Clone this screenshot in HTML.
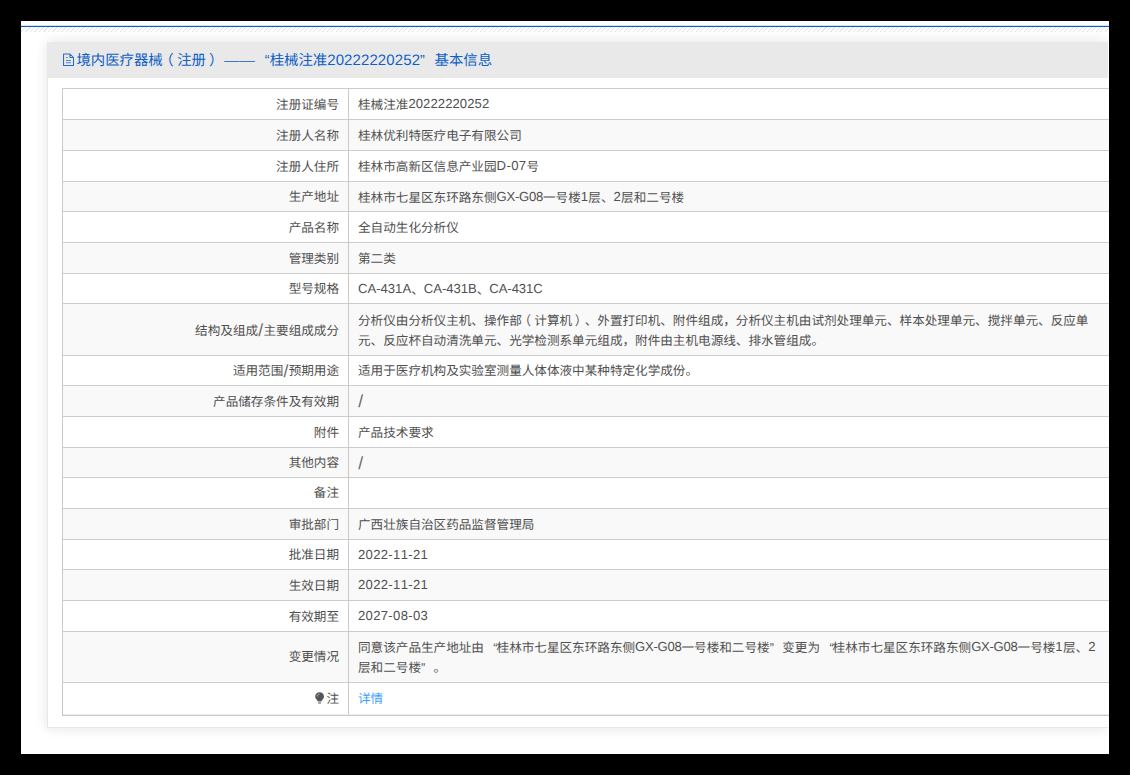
<!DOCTYPE html>
<html lang="zh-CN">
<head>
<meta charset="utf-8">
<title>境内医疗器械（注册）基本信息</title>
<style>
html,body{margin:0;padding:0;}
body{width:1130px;height:775px;background:#000;overflow:hidden;position:relative;
  font-family:"Liberation Sans",sans-serif;font-size:12.6px;line-height:19.7px;color:#505050;text-rendering:geometricPrecision;text-spacing-trim:space-all;font-kerning:none;}
.page{position:absolute;left:21px;top:21px;width:1088px;height:733px;background:#fff;overflow:hidden;}
/* coordinates inside .page are offset by -21,-21 via .abs wrapper */
.abs{position:absolute;left:-21px;top:-21px;width:1130px;height:775px;}
.topline{position:absolute;left:21px;top:26px;width:1088px;height:1px;background:#0e60c0;box-shadow:0 -1px 0 rgba(14,96,192,0.18);}
.hatch{position:absolute;left:21px;top:27px;width:1088px;height:5px;
  background:repeating-linear-gradient(135deg,#e3e3e3 0,#e3e3e3 0.7px,rgba(255,255,255,0) 0.75px,rgba(255,255,255,0) 3.18px);}
.panel{position:absolute;left:47px;top:42px;width:1061px;height:686px;background:#fff;border:1px solid #e8e8e8;border-right:0;box-sizing:border-box;
  box-shadow:0 0 12px rgba(0,0,0,0.115);}
.phead{position:absolute;left:-1px;top:-1px;width:1061px;height:35.5px;background:#e9e9e9;}
.title{position:absolute;left:15px;top:-1px;height:35.5px;line-height:35.5px;font-size:14.4px;color:#0e5fc4;white-space:nowrap;}
.title svg{position:absolute;left:0;top:11px;}
.title .t{position:absolute;left:13.4px;top:1px;white-space:nowrap;}
.n{font-size:13.1px;}
.v .n{position:relative;top:-1px;}
.title .n{font-size:15px;letter-spacing:0.1px;}
.em{display:inline-block;width:30.9px;}
.em i{display:inline-block;font-style:normal;transform:scaleX(1.07);transform-origin:0 50%;}
.s{font-size:17.5px;line-height:0;margin:0 0.25px;position:relative;top:1.5px;color:#6a6a6a;}
.pl{position:relative;left:-0.25em;}
.pr{position:relative;left:0.22em;}
.q{display:inline-block;width:1em;}
.ql{text-align:right;}
.qr{text-align:left;}
.v .ql{position:relative;left:1px;}
.tbl{position:absolute;left:62px;top:88px;width:1060px;height:628px;border-left:1px solid #c9c9c9;}
.r{position:absolute;left:0;width:100%;border-top:1px solid #cdcdcd;box-sizing:border-box;background:#fff;}
.r.g{background:#f9f9f9;}
.l{position:absolute;left:0;top:1.5px;bottom:-1.5px;width:285px;
  display:flex;align-items:center;justify-content:flex-end;padding-right:9px;box-sizing:content-box;width:276px;white-space:nowrap;}
.v{position:absolute;left:286px;top:1.5px;bottom:-1.5px;right:0;display:flex;align-items:center;padding-left:9px;white-space:nowrap;}
.bulb{vertical-align:-1.2px;margin-right:2.3px;}
a{color:#409eff;text-decoration:none;}
.vd{position:absolute;left:285px;top:0;width:1px;height:626px;background:#c9c9c9;}
.strip{position:absolute;left:1108px;top:33px;width:1px;height:721px;background:#fff;}
.bl{position:absolute;left:63px;top:714px;width:1060px;height:1px;background:#ececec;}
.bb{position:absolute;left:62px;top:715px;width:1060px;height:1px;background:#c9c9c9;}
</style>
</head>
<body>
<div class="page"><div class="abs">
  <div class="topline"></div>
  <div class="hatch"></div>
  <div class="panel">
    <div class="phead"></div>
    <div class="title">
      <svg width="12" height="14" viewBox="0 0 12 14"><path d="M0.55 1 H7 L10.5 4.5 V12.5 H0.55 Z M7 1 V4.5 H10.5" fill="none" stroke="#0e5fc4" stroke-width="1.05" stroke-linejoin="round" opacity="0.9"/><path d="M3 4.6H4.8 M3 7.5H8 M3 9.7H8" stroke="#0e5fc4" stroke-width="0.95" fill="none" opacity="0.75"/></svg>
      <span class="t">境内医疗器械<span class="pl">（</span>注册<span class="pr">）</span> <span class="em"><i>——</i></span><span class="q ql">“</span>桂械注准<span class="n">20222220252</span><span class="q qr">”</span>基本信息</span>
    </div>
  </div>
  <div class="strip"></div>
  <div class="tbl">
    <div class="r" style="top:0px;height:31px"><div class="l"><span>注册证编号</span></div><div class="v"><span>桂械注准<span class="n" style="letter-spacing:0.07px">20222220252</span></span></div></div>
    <div class="r g" style="top:31px;height:31px"><div class="l"><span>注册人名称</span></div><div class="v"><span>桂林优利特医疗电子有限公司</span></div></div>
    <div class="r" style="top:62px;height:31px"><div class="l"><span>注册人住所</span></div><div class="v"><span>桂林市高新区信息产业园<span class="n" style="letter-spacing:0.40px">D-07</span>号</span></div></div>
    <div class="r g" style="top:93px;height:30px"><div class="l"><span>生产地址</span></div><div class="v"><span>桂林市七星区东环路东侧<span class="n" style="letter-spacing:-0.27px">GX-G08</span>一号楼<span class="n" style="letter-spacing:0.31px">1</span>层、<span class="n" style="letter-spacing:0.31px">2</span>层和二号楼</span></div></div>
    <div class="r" style="top:123px;height:31px"><div class="l"><span>产品名称</span></div><div class="v"><span>全自动生化分析仪</span></div></div>
    <div class="r g" style="top:154px;height:31px"><div class="l"><span>管理类别</span></div><div class="v"><span>第二类</span></div></div>
    <div class="r" style="top:185px;height:30px"><div class="l"><span>型号规格</span></div><div class="v"><span><span class="n">CA-431A</span>、<span class="n" style="letter-spacing:-0.02px">CA-431B</span>、<span class="n" style="letter-spacing:-0.08px">CA-431C</span></span></div></div>
    <div class="r g" style="top:215px;height:52px"><div class="l" style="margin-top:1px"><span>结构及组成<span class="s">/</span>主要组成成分</span></div><div class="v" style="margin-top:1px"><span>分析仪由分析仪主机、操作部<span class="pl">（</span>计算机<span class="pr">）</span>、外置打印机、附件组成，分析仪主机由试剂处理单元、样本处理单元、搅拌单元、反应单<br>元、反应杯自动清洗单元、光学检测系单元组成，附件由主机电源线、排水管组成。</span></div></div>
    <div class="r" style="top:267px;height:30px"><div class="l"><span>适用范围<span class="s">/</span>预期用途</span></div><div class="v"><span>适用于医疗机构及实验室测量人体体液中某种特定化学成份。</span></div></div>
    <div class="r g" style="top:297px;height:31px"><div class="l"><span>产品储存条件及有效期</span></div><div class="v"><span><span class="s">/</span></span></div></div>
    <div class="r" style="top:328px;height:31px"><div class="l"><span>附件</span></div><div class="v"><span>产品技术要求</span></div></div>
    <div class="r g" style="top:359px;height:30px"><div class="l"><span>其他内容</span></div><div class="v"><span><span class="s">/</span></span></div></div>
    <div class="r" style="top:389px;height:31px"><div class="l" style="margin-top:-0.5px"><span>备注</span></div><div class="v" style="margin-top:-0.5px"><span></span></div></div>
    <div class="r g" style="top:420px;height:31px"><div class="l"><span>审批部门</span></div><div class="v"><span>广西壮族自治区药品监督管理局</span></div></div>
    <div class="r" style="top:451px;height:30px"><div class="l"><span>批准日期</span></div><div class="v"><span><span class="n" style="letter-spacing:0.31px">2022-11-21</span></span></div></div>
    <div class="r g" style="top:481px;height:31px"><div class="l"><span>生效日期</span></div><div class="v"><span><span class="n" style="letter-spacing:0.31px">2022-11-21</span></span></div></div>
    <div class="r" style="top:512px;height:31px"><div class="l"><span>有效期至</span></div><div class="v"><span><span class="n" style="letter-spacing:0.31px">2027-08-03</span></span></div></div>
    <div class="r g" style="top:543px;height:51px"><div class="l" style="margin-top:-0.5px"><span>变更情况</span></div><div class="v" style="margin-top:-0.5px"><span>同意该产品生产地址由<span class="q ql">“</span>桂林市七星区东环路东侧<span class="n" style="letter-spacing:-0.27px">GX-G08</span>一号楼和二号楼<span class="q qr">”</span>变更为<span class="q ql">“</span>桂林市七星区东环路东侧<span class="n" style="letter-spacing:-0.27px">GX-G08</span>一号楼<span class="n" style="letter-spacing:0.31px">1</span>层、<span class="n" style="letter-spacing:0.31px">2</span><br>层和二号楼<span class="q qr">”</span>。</span></div></div>
    <div class="r" style="top:594px;height:33px"><div class="l" style="margin-top:-1.5px"><span><svg class="bulb" width="9.2" height="11.8" viewBox="0 0 9.2 11.8"><path d="M4.6 0.2C2.1 0.2 0.2 2.1 0.2 4.4C0.2 5.8 0.9 6.7 1.6 7.5C2.1 8.1 2.5 8.6 2.6 9.3H6.6C6.7 8.6 7.1 8.1 7.6 7.5C8.3 6.7 9 5.8 9 4.4C9 2.1 7.1 0.2 4.6 0.2Z" fill="#555"/><path d="M2.1 4.5C2.1 3.2 3.1 2.1 4.5 2.1" stroke="#e4e4e4" stroke-width="0.7" fill="none"/><path d="M2.9 10.2H6.3M3.4 11.3H5.8" stroke="#777" stroke-width="0.9" fill="none"/></svg>注</span></div><div class="v" style="margin-top:-1.5px"><span><a>详情</a></span></div></div>
    <div class="vd"></div>
  </div>
  <div class="bl"></div><div class="bb"></div>
</div></div>
</body>
</html>
